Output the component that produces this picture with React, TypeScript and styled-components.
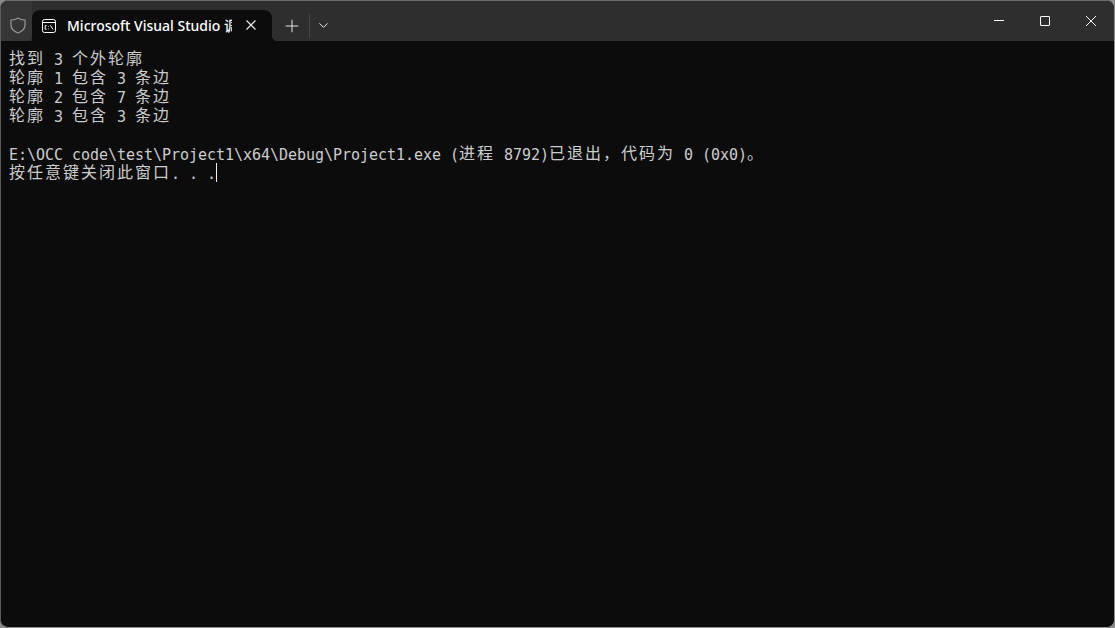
import styled, { createGlobalStyle } from 'styled-components'
import { Plus, ChevronDown } from 'lucide-react'

const Global = createGlobalStyle`
	html, body {
		margin: 0;
		padding: 0;
		background: #8c8c8c;
		overflow: hidden;
	}
`

const Wrapper = styled.div`
	width: 1115px;
	height: 628px;
	display: flex;
	flex-direction: column;
	box-sizing: border-box;
	background-color: #0c0c0c;
	border: 1px solid #8c8c8c;
	border-top-color: #6c6c6c;
	border-left-color: #5c5c5c;
	border-radius: 8px;
	overflow: hidden;
`

const TitleBar = styled.div`
	height: 40px;
	flex-shrink: 0;
	display: flex;
	align-items: flex-end;
	background-color: #2e2e2e;
`

const ShieldBox = styled.div`
	width: 31px;
	height: 40px;
	display: flex;
	align-items: center;
	justify-content: center;
	padding: 8px 0 0 3px;
	box-sizing: border-box;
	background-color: #363636;
	border-bottom-right-radius: 6px;
	color: #949494;
`

const Tab = styled.div`
	position: relative;
	width: 240px;
	height: 31px;
	display: flex;
	align-items: center;
	box-sizing: border-box;
	padding-left: 10px;
	background-color: #0c0c0c;
	border-radius: 8px 8px 0 0;
	color: #ffffff;

	&::after {
		content: '';
		position: absolute;
		right: -6px;
		bottom: 0;
		width: 6px;
		height: 6px;
		background: radial-gradient(circle at 100% 0, transparent 6px, #0c0c0c 6.5px);
	}
`

const TabTitle = styled.div`
	width: 165px;
	margin-left: 11px;
	margin-bottom: 2px;
	overflow: hidden;
	white-space: nowrap;
	font-family: 'Noto Sans', 'Noto Sans CJK SC', sans-serif;
	font-size: 14px;
	font-weight: 500;
`

const TabClose = styled.div`
	margin-left: 14px;
	margin-bottom: 1px;
	display: flex;
	color: #f0f0f0;
`

const TabActions = styled.div`
	display: flex;
	align-items: center;
	height: 31px;
	margin-left: 10px;
	color: #f4f4f4;
`

const Divider = styled.div`
	width: 1px;
	height: 24px;
	margin: 0 6px 0 7px;
	background-color: #454545;
`

const WindowButtons = styled.div`
	margin-left: auto;
	height: 40px;
	display: flex;
	color: #ffffff;
`

const WindowButton = styled.div`
	width: 46px;
	display: flex;
	align-items: center;
	justify-content: center;
	box-sizing: border-box;
`

const Console = styled.div`
	flex: 1;
	padding: 8px 0 0 8px;
	font-family: 'DejaVu Sans Mono', 'Noto Sans CJK SC', monospace;
	font-size: 15px;
	line-height: 19px;
	color: #cccccc;
	white-space: pre;
`

const Line = styled.div`
	height: 19px;
	display: flex;
`

const Narrow = styled.span`
	width: 9px;
	padding-top: 2px;
	flex-shrink: 0;
	text-align: center;
`

const Wide = styled.span`
	width: 18px;
	margin-top: -1px;
	padding-right: 2px;
	box-sizing: border-box;
	flex-shrink: 0;
	text-align: center;
	font-family: 'Noto Sans CJK SC', sans-serif;
	font-size: 16px;
`

const Cursor = styled.span`
	width: 1px;
	height: 19px;
	background-color: #f2f2f2;
`

const lines = [
	'找到 3 个外轮廓',
	'轮廓 1 包含 3 条边',
	'轮廓 2 包含 7 条边',
	'轮廓 3 包含 3 条边',
	'',
	'E:\\OCC code\\test\\Project1\\x64\\Debug\\Project1.exe (进程 8792)已退出，代码为 0 (0x0)。',
]
const prompt = '按任意键关闭此窗口. . .'

const renderCells = (text: string) =>
	Array.from(text).map((ch, i) =>
		ch.charCodeAt(0) > 255 ? <Wide key={i}>{ch}</Wide> : <Narrow key={i}>{ch}</Narrow>
	)

const App = () => {
	return (
		<>
			<Global />
			<Wrapper>
				<TitleBar>
					<ShieldBox>
						<svg width="16" height="17" viewBox="0 0 16 17" fill="none" stroke="currentColor" strokeWidth="1.3">
							<path d="M8 1 C10 2.4 12.4 3 15 3.1 V8 C15 11.8 12.2 14.4 8 16 C3.8 14.4 1 11.8 1 8 V3.1 C3.6 3 6 2.4 8 1 Z" />
						</svg>
					</ShieldBox>
					<Tab>
						<svg width="14" height="14" viewBox="0 0 14 14" fill="none" stroke="currentColor" strokeWidth="1">
							<rect x="0.5" y="0.5" width="13" height="13" rx="2" />
							<path d="M0.5 3.5 H13.5" />
							<path d="M4.6 6.6 H3.2 V10.2 H4.6 M6.5 7 V7.6 M6.5 9.6 V10.2 M8.4 6.4 L11 10.4" strokeWidth="1" />
						</svg>
						<TabTitle>Microsoft Visual Studio 调试控制台</TabTitle>
						<TabClose>
							<svg width="10" height="10" viewBox="0 0 10 10" fill="none" stroke="currentColor" strokeWidth="1.1">
								<path d="M0.5 0.5 L9.5 9.5 M9.5 0.5 L0.5 9.5" />
							</svg>
						</TabClose>
					</Tab>
					<TabActions>
						<Plus size={20} strokeWidth={1.1} />
						<Divider />
						<ChevronDown size={15} strokeWidth={1.5} />
					</TabActions>
					<WindowButtons>
						<WindowButton>
							<svg width="10" height="10" viewBox="0 0 10 10" fill="none" stroke="currentColor">
								<path d="M0 4.5 H10" />
							</svg>
						</WindowButton>
						<WindowButton>
							<svg width="10" height="10" viewBox="0 0 10 10" fill="none" stroke="currentColor">
								<rect x="0.5" y="0.5" width="9" height="9" rx="0.5" />
							</svg>
						</WindowButton>
						<WindowButton>
							<svg width="10" height="10" viewBox="0 0 10 10" fill="none" stroke="currentColor">
								<path d="M0 0 L10 10 M10 0 L0 10" />
							</svg>
						</WindowButton>
					</WindowButtons>
				</TitleBar>
				<Console>
					{lines.map((line, i) => (
						<Line key={i}>{renderCells(line)}</Line>
					))}
					<Line>
						{renderCells(prompt)}
						<Cursor />
					</Line>
				</Console>
			</Wrapper>
		</>
	)
}

export default App
